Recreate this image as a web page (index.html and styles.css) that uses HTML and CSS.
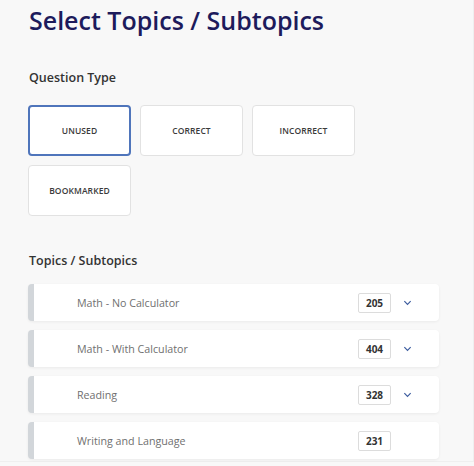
FILE: index.html
```html
<!DOCTYPE html>
<html>
<head>
<meta charset="utf-8">
<link rel="stylesheet" href="styles.css">
</head>
<body>
<div class="page">
  <h1 class="title">Select Topics / Subtopics</h1>
  <h2 class="section">Question Type</h2>
  <div class="types">
    <div class="type selected">UNUSED</div>
    <div class="type">CORRECT</div>
    <div class="type">INCORRECT</div>
    <div class="type">BOOKMARKED</div>
  </div>
  <h2 class="section topics-head">Topics / Subtopics</h2>
  <div class="topics">
    <div class="topic">
      <span class="name">Math - No Calculator</span>
      <span class="count">205</span>
      <svg class="chev" viewBox="0 0 10 6" width="9" height="6"><path d="M1.5 1l3.5 3.6 3.5-3.6" fill="none" stroke="#3b5b9e" stroke-width="1.3"/></svg>
    </div>
    <div class="topic">
      <span class="name">Math - With Calculator</span>
      <span class="count">404</span>
      <svg class="chev" viewBox="0 0 10 6" width="9" height="6"><path d="M1.5 1l3.5 3.6 3.5-3.6" fill="none" stroke="#3b5b9e" stroke-width="1.3"/></svg>
    </div>
    <div class="topic">
      <span class="name">Reading</span>
      <span class="count">328</span>
      <svg class="chev" viewBox="0 0 10 6" width="9" height="6"><path d="M1.5 1l3.5 3.6 3.5-3.6" fill="none" stroke="#3b5b9e" stroke-width="1.3"/></svg>
    </div>
    <div class="topic">
      <span class="name">Writing and Language</span>
      <span class="count">231</span>
      <span class="chev-space"></span>
    </div>
  </div>
</div>
</body>
</html>
```

FILE: styles.css
```css
html, body {
  margin: 0;
  padding: 0;
  background: #f8f8f8;
}
body {
  font-family: "Open Sans", "Noto Sans", sans-serif;
  width: 474px;
  height: 466px;
  overflow: hidden;
}
.page {
  padding: 0 34px 0 28px;
  box-sizing: border-box;
  width: 474px;
  height: 462px;
  border-right: 1px solid #efefef;
  border-bottom: 1px solid #efefef;
}
.title {
  margin: 0;
  padding-top: 2px;
  padding-left: 1px;
  font-size: 25px;
  line-height: 36px;
  font-weight: 600;
  color: #1d1b5c;
}
.section {
  margin: 0;
  font-size: 12.5px;
  line-height: 18px;
  font-weight: 600;
  color: #333;
  padding-left: 1px;
}
.title + .section {
  margin-top: 31px;
}
.types {
  margin-top: 18px;
  display: grid;
  grid-template-columns: repeat(3, 103px);
  grid-auto-rows: 51px;
  gap: 9px;
}
.type {
  background: #fff;
  border: 1px solid #e2e2e2;
  border-radius: 4px;
  display: flex;
  align-items: center;
  justify-content: center;
  font-size: 8.5px;
  font-weight: 600;
  color: #3a3a3a;
  letter-spacing: 0.1px;
}
.type.selected {
  border: 2px solid #4f75bb;
}
.topics-head {
  margin-top: 36px;
}
.topics {
  margin-top: 14px;
  display: flex;
  flex-direction: column;
  gap: 9px;
}
.topic {
  height: 37px;
  background: #fff;
  border-left: 6px solid #d2d6da;
  border-radius: 4px;
  box-shadow: 0 1px 3px rgba(0,0,0,0.06);
  display: flex;
  align-items: center;
  padding-left: 43px;
  padding-right: 27px;
}
.name {
  flex: 1;
  font-size: 10.7px;
  font-weight: 400;
  color: #707070;
}
.count {
  width: 31px;
  height: 18px;
  border: 1px solid #dcdcdc;
  border-radius: 2px;
  display: flex;
  align-items: center;
  justify-content: center;
  font-size: 10px;
  font-weight: 700;
  color: #333;
}
.chev {
  margin-left: 12px;
}
.chev-space {
  width: 9px;
  margin-left: 12px;
}
```
